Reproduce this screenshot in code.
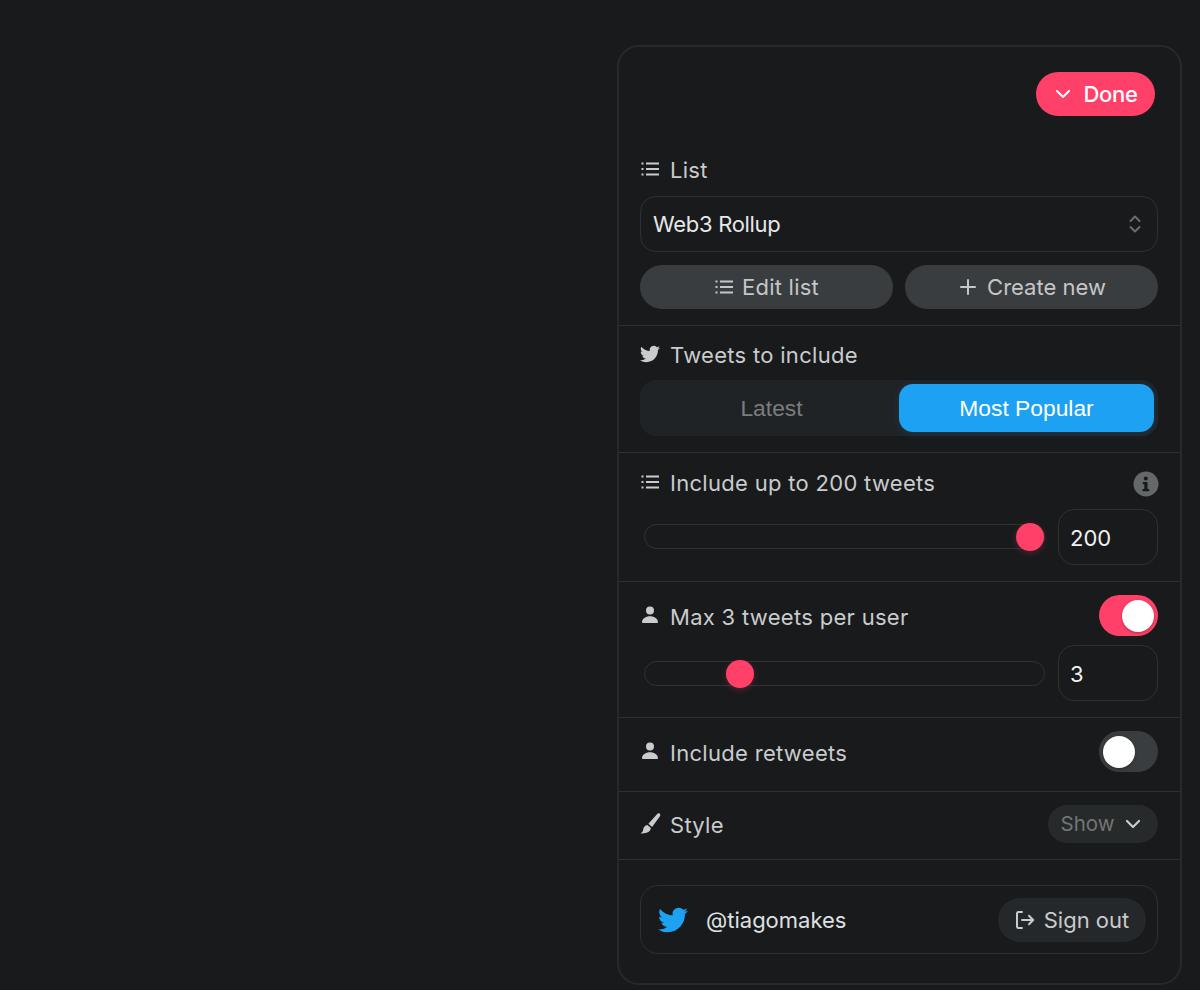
<script>
  const sliders = { a: 385, b: 95 };
</script>

<div class="page">
  <aside class="panel">
    <section class="top">
      <div class="doneRow">
        <button class="done">
          <svg viewBox="0 0 16 16" width="16" height="16"><path d="M2 5l6 6 6-6" fill="none" stroke="currentColor" stroke-width="2" stroke-linecap="round" stroke-linejoin="round"/></svg>
          Done
        </button>
      </div>
      <div class="label listLabel">
        <svg class="ic" viewBox="0 0 20 20" width="20" height="20"><use href="#i-list"/></svg>
        <span>List</span>
      </div>
      <div class="select">
        <span>Web3 Rollup</span>
        <svg viewBox="0 0 12 20" width="12" height="20"><path d="M1.5 7 6 2.5 10.500 7M1.500 13 6 17.500 10.500 13" fill="none" stroke="#6a6d6f" stroke-width="2" stroke-linecap="round" stroke-linejoin="round"/></svg>
      </div>
      <div class="twoBtns">
        <button class="grey">
          <svg viewBox="0 0 20 20" width="20" height="20"><use href="#i-list"/></svg>
          Edit list
        </button>
        <button class="grey plus">
          <svg viewBox="0 0 16 16" width="16" height="16"><path d="M8 1v14M1 8h14" stroke="currentColor" stroke-width="2" stroke-linecap="round"/></svg>
          Create new
        </button>
      </div>
    </section>

    <section class="tweets">
      <div class="label">
        <svg class="ic" viewBox="0 0 24 24" width="20" height="20"><use href="#i-bird"/></svg>
        <span>Tweets to include</span>
      </div>
      <div class="seg">
        <div class="opt">Latest</div>
        <div class="opt on">Most Popular</div>
      </div>
    </section>

    <section class="count">
      <div class="labelRow">
        <div class="label">
          <svg class="ic" viewBox="0 0 20 20" width="20" height="20"><use href="#i-list"/></svg>
          <span>Include up to 200 tweets</span>
        </div>
        <svg class="info" viewBox="0 0 26 26" width="26" height="26">
          <circle cx="13" cy="13" r="12.500" fill="#646868"/>
          <circle cx="12.800" cy="7.500" r="2" fill="#18191b"/>
          <path d="M9.800 11h4.700v7h1.700v2.200H9.500V18h1.800v-4.800H9.800z" fill="#18191b"/>
        </svg>
      </div>
      <div class="sliderRow">
        <div class="track"><span class="thumb" style="left:{sliders.a - 14}px"></span></div>
        <div class="num">200</div>
      </div>
    </section>

    <section class="max">
      <div class="labelRow">
        <div class="label">
          <svg class="ic" viewBox="0 0 20 20" width="20" height="20"><use href="#i-user"/></svg>
          <span>Max 3 tweets per user</span>
        </div>
        <div class="toggle on"><span></span></div>
      </div>
      <div class="sliderRow">
        <div class="track"><span class="thumb" style="left:{sliders.b - 14}px"></span></div>
        <div class="num">3</div>
      </div>
    </section>

    <section class="retweets">
      <div class="label">
        <svg class="ic" viewBox="0 0 20 20" width="20" height="20"><use href="#i-user"/></svg>
        <span>Include retweets</span>
      </div>
      <div class="toggle"><span></span></div>
    </section>

    <section class="style">
      <div class="label">
        <svg class="ic" viewBox="1 0.500 20.500 20.500" width="21" height="21">
          <path d="M20.300 1.300c.8.7.6 1.700 0 2.500l-7.500 10.300-3.600-3.200L17.800 1.500c.8-.7 1.800-.9 2.500-.2zM8.300 12.100l3.300 3c-.3 3.400-3.800 5.700-10 5.300 1.700-1 2.300-2 2.500-3.700.2-2.500 1.800-4.600 4.200-4.600z" fill="currentColor"/>
        </svg>
        <span>Style</span>
      </div>
      <button class="show">
        <span>Show</span>
        <svg viewBox="0 0 16 16" width="16" height="16"><path d="M2 5l6 6 6-6" fill="none" stroke="#c9cbcc" stroke-width="2.200" stroke-linecap="round" stroke-linejoin="round"/></svg>
      </button>
    </section>

    <section class="account">
      <div class="card">
        <svg class="bird" viewBox="0 0 24 24" width="30" height="30"><use href="#i-bird"/></svg>
        <span class="handle">@tiagomakes</span>
        <button class="signout">
          <svg viewBox="0 0 20 20" width="20" height="20"><path d="M7 2H3.500A1.500 1.500 0 0 0 2 3.500v13A1.500 1.500 0 0 0 3.500 18H7M7 10h11M14 5.800 18.200 10 14 14.200" fill="none" stroke="currentColor" stroke-width="2" stroke-linecap="round" stroke-linejoin="round"/></svg>
          Sign out
        </button>
      </div>
    </section>
  </aside>

  <svg class="defs" width="0" height="0" aria-hidden="true">
    <defs>
      <g id="i-list">
        <path d="M6 4.500h13M6 10h13M6 15.500h13" stroke="currentColor" stroke-width="2" fill="none"/>
        <path d="M1.500 4.500h2M1.500 10h2M1.500 15.500h2" stroke="currentColor" stroke-width="2" fill="none"/>
      </g>
      <path id="i-bird" fill="currentColor" d="M23.953 4.570a10 10 0 0 1-2.825.775 4.958 4.958 0 0 0 2.163-2.723c-.951.555-2.005.959-3.127 1.184a4.920 4.920 0 0 0-8.384 4.482C7.690 8.095 4.067 6.130 1.640 3.162a4.822 4.822 0 0 0-.666 2.475c0 1.710.870 3.213 2.188 4.096a4.904 4.904 0 0 1-2.228-.616v.060a4.923 4.923 0 0 0 3.946 4.827 4.996 4.996 0 0 1-2.212.085 4.936 4.936 0 0 0 4.604 3.417 9.867 9.867 0 0 1-6.102 2.105c-.390 0-.779-.023-1.170-.067a13.995 13.995 0 0 0 7.557 2.209c9.053 0 13.998-7.496 13.998-13.985 0-.210 0-.420-.015-.630A9.935 9.935 0 0 0 24 4.590z"/>
      <path id="i-user" fill="currentColor" d="M10 9.500a4 4 0 1 0 0-8 4 4 0 0 0 0 8zM2 17.200c0-3.600 3.600-6 8-6s8 2.400 8 6c0 .5-.4.8-.9.8H2.900c-.5 0-.9-.3-.9-.8z"/>
    </defs>
  </svg>
</div>

<style>
  :global(body) {
    margin: 0;
    background: #181a1c;
  }
  .page {
    display: flex;
    justify-content: flex-end;
    padding: 45px 18px 0 0;
    height: 990px;
    box-sizing: border-box;
    overflow: hidden;
    font-family: Inter, "Liberation Sans", sans-serif;
    font-size: 22px;
    color: #c9cbcc;
  }
  .defs { position: absolute; }
  .panel {
    width: 565px;
    height: 940px;
    box-sizing: border-box;
    border: 2px solid #27292b;
    border-radius: 22px;
    display: flex;
    flex-direction: column;
  }
  section {
    border-bottom: 1px solid #2e3032;
    padding: 0 22px 0 21px;
    box-sizing: border-box;
    flex: none;
  }
  section:last-child { border-bottom: 0; }
  button {
    font: inherit;
    color: inherit;
    border: 0;
    display: flex;
    align-items: center;
    justify-content: center;
    cursor: pointer;
  }
  .top { height: 279px; padding-top: 25px; }
  .doneRow { display: flex; justify-content: flex-end; padding-right: 3px; }
  .done {
    width: 119px;
    height: 44px;
    background: #ff4068;
    color: #fff;
    border-radius: 22px;
    gap: 12px;
    font-weight: 500;
    letter-spacing: -0.3px;
    padding: 0 0 0 2px;
  }
  .label {
    display: flex;
    align-items: center;
    gap: 10px;
    height: 28px;
    line-height: 28px;
    letter-spacing: 0.3px;
  }
  .ic { flex: none; margin-top: -2px; }
  .listLabel { margin-top: 40px; }
  .select {
    margin-top: 12px;
    height: 56px;
    box-sizing: border-box;
    border: 1px solid #2e3032;
    border-radius: 16px;
    display: flex;
    align-items: center;
    justify-content: space-between;
    padding: 0 16px 0 12px;
    color: #e6e7e8;
    letter-spacing: -0.3px;
  }
  .twoBtns {
    margin-top: 13px;
    display: grid;
    grid-template-columns: 1fr 1fr;
    gap: 12px;
  }
  .grey {
    height: 44px;
    border-radius: 22px;
    background: #3a3d3f;
    gap: 8px;
    color: #c4c6c7;
    letter-spacing: 0.25px;
    padding: 0;
  }
  .plus { gap: 11px; letter-spacing: 0; padding-left: 3px; }
  .tweets { height: 127px; padding-top: 15px; }
  .seg {
    margin-top: 11px;
    height: 56px;
    background: #202326;
    border-radius: 16px;
    display: grid;
    grid-template-columns: 1fr 1fr;
    padding: 4px;
    box-sizing: border-box;
    font-family: "Liberation Sans", Arial, sans-serif;
    font-size: 22.8px;
  }
  .opt {
    display: flex;
    align-items: center;
    justify-content: center;
    color: #7a7d7f;
    border-radius: 14px;
  }
  .opt.on {
    background: #1da1f2;
    color: #fff;
    box-shadow: 0 2px 8px rgba(29, 161, 242, 0.15);
  }
  .count { height: 129px; padding-top: 16px; }
  .labelRow {
    display: flex;
    align-items: center;
    justify-content: space-between;
  }
  .info { margin: 2px -1px 0 0; }
  .sliderRow {
    display: flex;
    align-items: center;
    gap: 13px;
    margin-top: 12px;
  }
  .track {
    position: relative;
    flex: 1;
    height: 25px;
    margin: -2px 0 0 4px;
    box-sizing: border-box;
    border: 1px solid #303234;
    border-radius: 13px;
  }
  .thumb {
    position: absolute;
    top: -2px;
    width: 28px;
    height: 28px;
    border-radius: 50%;
    background: #ff4068;
    box-shadow: 0 2px 6px rgba(255, 64, 104, 0.25);
  }
  .num {
    width: 100px;
    height: 56px;
    box-sizing: border-box;
    border: 1px solid #2e3032;
    border-radius: 16px;
    display: flex;
    align-items: center;
    padding: 2px 0 0 11px;
    color: #f0f1f1;
    flex: none;
  }
  .max { height: 136px; padding-top: 13px; }
  .max .sliderRow { margin-top: 9px; }
  .max .track { margin-top: 0; }
  .max .label span, .retweets .label span { padding-top: 2px; }
  .toggle {
    width: 59px;
    height: 41px;
    border-radius: 21px;
    background: #3a3d3f;
    position: relative;
    flex: none;
  }
  .toggle span {
    position: absolute;
    top: 5px;
    left: 4px;
    width: 32px;
    height: 32px;
    border-radius: 50%;
    background: #fff;
    box-shadow: 0 1px 3px rgba(0, 0, 0, 0.3);
  }
  .toggle.on { background: #ff4068; }
  .toggle.on span { left: 23px; }
  .retweets, .style {
    display: flex;
    align-items: center;
    justify-content: space-between;
  }
  .retweets { height: 74px; padding-bottom: 6px; }
  .style { height: 68px; padding-bottom: 4px; }
  .style .label { height: 30px; padding-top: 2px; box-sizing: border-box; gap: 9px; }
  .show {
    width: 110px;
    height: 38px;
    border-radius: 19px;
    background: #272a2b;
    color: #727576;
    gap: 11px;
    font-size: 20.500px;
    padding: 0 4px 0 0;
  }
  .account { padding-top: 25px; }
  .card {
    height: 69px;
    box-sizing: border-box;
    border: 1px solid #2e3032;
    border-radius: 18px;
    display: flex;
    align-items: center;
    padding: 0 11px 0 17px;
  }
  .bird { color: #1da1f2; flex: none; }
  .handle { margin-left: 18px; color: #dfe0e1; flex: 1; }
  .signout {
    width: 148px;
    height: 44px;
    border-radius: 22px;
    background: #25282a;
    gap: 9px;
    padding: 0;
  }
</style>
